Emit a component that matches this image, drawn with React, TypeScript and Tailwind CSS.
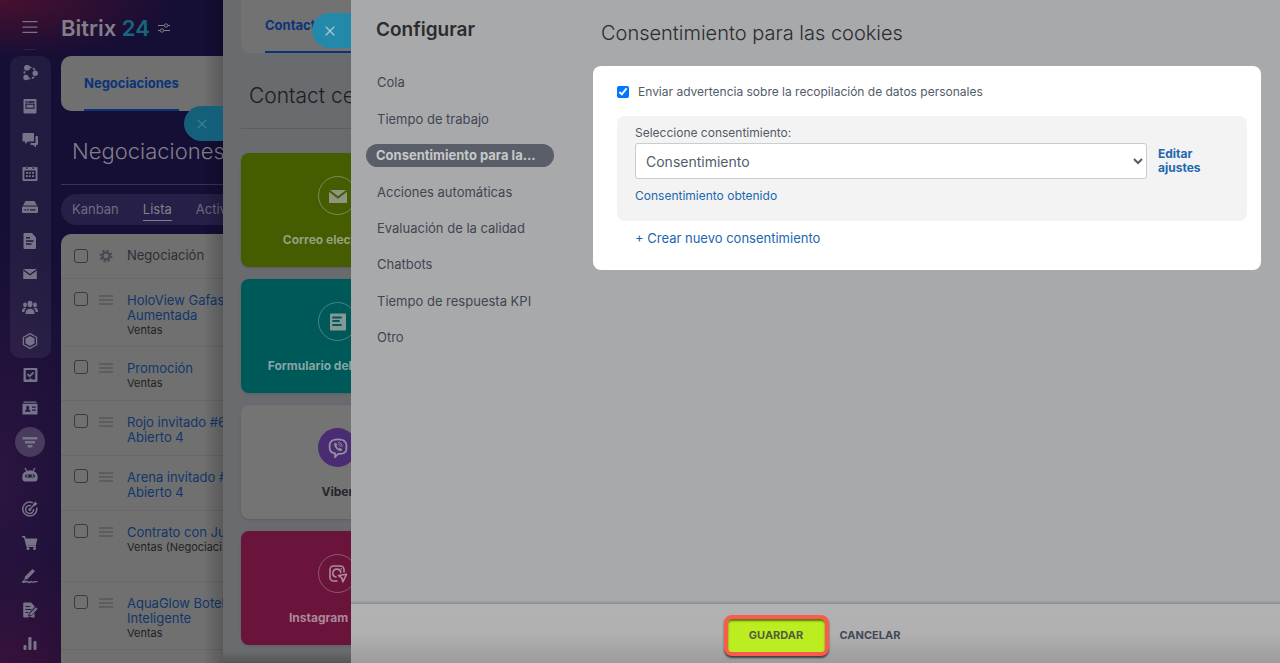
import React, { useState } from 'react';
import { X } from 'lucide-react';

interface IconProps {
  children: React.ReactNode;
  className?: string;
}

interface DealRow {
  id: string;
  lines: string[];
  note?: string;
  height: string;
}

interface ChannelCard {
  title: string;
  card: string;
  ring: string;
  text: string;
  icon: React.ReactNode;
}

// Solid 16px glyph, inner cut-outs use the dark sidebar colour
const Glyph: React.FC<IconProps> = ({ children, className = 'size-4' }) => (
  <svg viewBox="0 0 16 16" fill="currentColor" className={className} aria-hidden="true">
    {children}
  </svg>
);

const CUT = '#211a40';

const mainIcons: { label: string; icon: React.ReactNode }[] = [
  {
    label: 'Colaboración',
    icon: (
      <Glyph>
        <circle cx="8" cy="8" r="5.6" fill="none" stroke="currentColor" strokeWidth="1.7" strokeDasharray="2.6 1.5" />
        <circle cx="5" cy="2.7" r="2.9" />
        <circle cx="13.2" cy="8.3" r="2.7" />
        <circle cx="4" cy="12.5" r="2.7" />
      </Glyph>
    ),
  },
  {
    label: 'Noticias',
    icon: (
      <Glyph>
        <rect x="1.5" y="1" width="13" height="14.5" rx="1" />
        <path d="M3.5 3.2h2v1.5h-2zM6.3 3.2h6.2v1.5H6.3z" fill={CUT} />
        <rect x="4" y="6.2" width="8" height="4" fill="none" stroke={CUT} strokeWidth="1.1" />
      </Glyph>
    ),
  },
  {
    label: 'Chat',
    icon: (
      <Glyph>
        <path d="M1.5 1h9.5a1 1 0 0 1 1 1v6.500a1 1 0 0 1-1 1H6L3.200 12V9.500H1.500a1 1 0 0 1-1-1V2a1 1 0 0 1 1-1z" />
        <path d="M13.500 4H15a1 1 0 0 1 1 1v7a1 1 0 0 1-1 1h-1v2.500L11 13H8.500v-2H13.500z" />
      </Glyph>
    ),
  },
  {
    label: 'Calendario',
    icon: (
      <Glyph>
        <path d="M1.500 2h13a1 1 0 0 1 1 1v12a1 1 0 0 1-1 1h-13a1 1 0 0 1-1-1V3a1 1 0 0 1 1-1z" />
        <path d="M2.400 5.500h11.200v8.600H2.400z" fill={CUT} />
        <path d="M4 1h1.500v2.500H4zM10.500 1H12v2.500h-1.500z" stroke={CUT} strokeWidth="0.600" />
        <path d="M6.800 7h2v1.700h-2zM10 7h2v1.700h-2zM4 10.300h2V12H4zM6.800 10.300h2V12h-2zM10 10.300h2V12h-2zM4 7h2v1.700H4z" />
      </Glyph>
    ),
  },
  {
    label: 'Drive',
    icon: (
      <Glyph>
        <path d="M3.500 2h9L15 6.500H1zM1 7.500h14a1 1 0 0 1 1 1V13a1 1 0 0 1-1 1H1a1 1 0 0 1-1-1V8.500a1 1 0 0 1 1-1z" />
        <path d="M2.500 10.200h1.600v1.300H2.500zM5 10.200h1.600v1.300H5zM8 10.200h5.500v1.300H8z" fill={CUT} />
      </Glyph>
    ),
  },
  {
    label: 'Documentos',
    icon: (
      <Glyph>
        <path d="M2.500 0H10l4 4.500V15a1 1 0 0 1-1 1H2.500a1 1 0 0 1-1-1V1a1 1 0 0 1 1-1z" />
        <path d="M4 4.800h4M4 8h7.500M4 11h5.500" stroke={CUT} strokeWidth="1.400" />
      </Glyph>
    ),
  },
  {
    label: 'Correo',
    icon: (
      <Glyph>
        <path d="M1.200 3h13.600v10H1.200z" />
        <path d="M1.200 3.800l6.800 5 6.800-5" fill="none" stroke={CUT} strokeWidth="1.300" />
      </Glyph>
    ),
  },
  {
    label: 'Grupos',
    icon: (
      <Glyph className="w-[18px] h-4">
        <ellipse cx="8" cy="4" rx="2.500" ry="3.200" />
        <path d="M3.500 14c0-3.500 1.200-4.300 3.200-5.200h2.600c2 .9 3.200 1.700 3.200 5.200z" />
        <ellipse cx="3" cy="5" rx="1.900" ry="2.400" />
        <ellipse cx="13" cy="5" rx="1.900" ry="2.400" />
        <path d="M0 12c0-2.500.5-3.300 2-4h2.300C2.800 9.200 2.500 10.500 2.400 12zM16 12c0-2.500-.5-3.300-2-4h-2.300c1.500 1.200 1.800 2.500 1.900 4z" />
      </Glyph>
    ),
  },
  {
    label: 'CRM',
    icon: (
      <Glyph>
        <path d="M8 .6l6.600 3.700v7.400L8 15.400l-6.600-3.700V4.300z" fill="none" stroke="currentColor" strokeWidth="1.300" />
        <path d="M8 3l4.500 2.500v5L8 13l-4.500-2.500v-5z" />
      </Glyph>
    ),
  },
];

const extraIcons: { label: string; icon: React.ReactNode; active?: boolean }[] = [
  {
    label: 'Tareas',
    icon: (
      <Glyph>
        <rect x="1.500" y="1" width="14" height="14" rx="1" />
        <path d="M3.800 3h9.400v9.500H10L8.500 11 7 12.500H3.800z" fill={CUT} />
        <path d="M5.500 7.200l2.200 2.200 3.900-4" fill="none" stroke="currentColor" strokeWidth="1.700" />
      </Glyph>
    ),
  },
  {
    label: 'Contactos',
    icon: (
      <Glyph>
        <path d="M1.500 1.500h13v1.200h-13zM.5 3.700h15v10.800H.5z" />
        <path d="M3 11.800c0-1.600.8-2 1.800-2.500-1-1.500-.6-3.600.9-3.600s1.900 2.100.9 3.600c1 .5 1.800.9 1.800 2.500zM10 6.500h3.800v1.200H10zM10 9.500h3.800v1.200H10z" fill={CUT} />
      </Glyph>
    ),
  },
  {
    label: 'Embudo',
    active: true,
    icon: (
      <Glyph>
        <path d="M.5 3h15v2.500H.5zM3 7h10v2.500H3zM5.500 11h5v2.500h-5z" />
      </Glyph>
    ),
  },
  {
    label: 'Automatización',
    icon: (
      <Glyph>
        <path d="M3 1l1.800 3M13 1l-1.800 3" stroke="currentColor" strokeWidth="1.300" />
        <path d="M.3 10.500C.3 5.500 3.500 3.500 8 3.500s7.700 2 7.700 7c0 3-1.200 4-3 4H3.300c-1.800 0-3-1-3-4z" />
        <rect x="3" y="7.400" width="10" height="3.200" rx="1.600" fill={CUT} />
        <circle cx="5.500" cy="9" r="1" />
        <circle cx="10.500" cy="9" r="1" />
      </Glyph>
    ),
  },
  {
    label: 'Marketing',
    icon: (
      <Glyph>
        <path d="M10.800 1.700A7 7 0 1 0 14.600 6.500M9 4.700A4 4 0 1 0 11.600 8" fill="none" stroke="currentColor" strokeWidth="1.500" />
        <circle cx="7.800" cy="8.500" r="1.500" />
        <path d="M7.800 8.500L12 4" stroke="currentColor" strokeWidth="1.400" />
        <path d="M11 3l2.700-2.700.4 1.700 1.700.4L13 5h-2z" />
      </Glyph>
    ),
  },
  {
    label: 'Tienda',
    icon: (
      <Glyph>
        <path d="M0 1.800h2.500L5 11.200h9" fill="none" stroke="currentColor" strokeWidth="1.400" />
        <path d="M3 3.500h12.500L13.800 10.500H4.800z" />
        <circle cx="6" cy="13.500" r="1.500" />
        <circle cx="12.500" cy="13.500" r="1.500" />
      </Glyph>
    ),
  },
  {
    label: 'Firma',
    icon: (
      <Glyph>
        <path d="M10.500 1L13 3.300 5.500 11l-3.200.9.700-3.300zM.3 13c1.700-2 3 .5 4.500-.2s1.500 1.500 3 .6 1.200-1 2.500-.2 2-.7 5.200-.2v1.400c-2.700-.3-3.500 1-5 .3s-2.200 1.300-4 .2-3.200 0-6.200 0z" />
      </Glyph>
    ),
  },
  {
    label: 'Editar sitio',
    icon: (
      <Glyph>
        <path d="M2.200.5H9L12.500 4v1.200L7 11l-1 3.500 3.500-.8 3-3v4.800H10l-2-1-2 1H2.200a1 1 0 0 1-1-1v-13a1 1 0 0 1 1-1z" />
        <path d="M3.500 4.500H8M3.500 7.500h6M3.500 10.500h2.700" stroke={CUT} strokeWidth="1.200" />
        <path d="M14 5.200l1.700 1.600-6 6.200-2.300.6.600-2.300z" />
      </Glyph>
    ),
  },
  {
    label: 'Analítica',
    icon: (
      <Glyph>
        <rect x="1.500" y="10" width="3" height="5" rx="1" />
        <rect x="6.300" y="2" width="3.200" height="13" rx="1" />
        <rect x="11.500" y="6" width="3" height="9" rx="1" />
      </Glyph>
    ),
  },
];

const deals: DealRow[] = [
  { id: 'holoview', lines: ['HoloView Gafas', 'Aumentada'], note: 'Ventas', height: 'h-[68px]' },
  { id: 'promo', lines: ['Promoción'], note: 'Ventas', height: 'h-[54px]' },
  { id: 'rojo', lines: ['Rojo invitado #6', 'Abierto 4'], height: 'h-[55px]' },
  { id: 'arena', lines: ['Arena invitado #', 'Abierto 4'], height: 'h-[55px]' },
  { id: 'contrato', lines: ['Contrato con Ju'], note: 'Ventas (Negociaci', height: 'h-[71px]' },
  { id: 'aquaglow', lines: ['AquaGlow Botel', 'Inteligente'], note: 'Ventas', height: 'h-[68px]' },
];

const channels: ChannelCard[] = [
  {
    title: 'Correo electrónico',
    card: 'bg-[#465c00]',
    ring: 'border border-[#7d8a55]',
    text: 'text-[#989e80]',
    icon: (
      <svg viewBox="0 0 20 20" className="size-5 text-[#909582]" aria-hidden="true">
        <path d="M1 4h18v13H1z" fill="currentColor" />
        <path d="M1 4.500l9 7 9-7" fill="none" stroke="#465c00" strokeWidth="2" />
      </svg>
    ),
  },
  {
    title: 'Formulario del sitio web',
    card: 'bg-[#005959]',
    ring: 'border border-[#4b8383]',
    text: 'text-[#86a5a5]',
    icon: (
      <svg viewBox="0 0 20 20" className="size-5 text-[#869898]" aria-hidden="true">
        <rect x="2" y="1.500" width="16" height="17" rx="1" fill="currentColor" />
        <path d="M5 5.500h8M5 9h6M5 13h8" stroke="#005959" strokeWidth="1.800" strokeLinecap="round" />
      </svg>
    ),
  },
  {
    title: 'Viber',
    card: 'bg-[#747474]',
    ring: 'bg-[#4a2c72]',
    text: 'text-[#24272e]',
    icon: (
      <svg viewBox="0 0 20 20" fill="none" stroke="#978fa0" className="size-5" aria-hidden="true">
        <path d="M5.500 2C8 1.200 12 1.200 14.500 2c2.500.8 3.500 2 3.800 4.500.3 2.300.2 4.500-.3 6.200-.7 2.100-2.200 2.800-5.500 3.100-.8.100-1.500.100-2.300.100L7 19v-3.500C3.500 14.900 2.200 13.500 1.800 11c-.3-2-.3-3.500 0-5C2.200 3.500 3.300 2.700 5.500 2z" strokeWidth="1.800" />
        <path d="M6.500 5.500c-.7 3 2.500 7 6.500 7.500l1-1.500-2.200-1.500-1 .8C9.500 10 8.800 9.300 8.300 8L9 7 7.800 5z" fill="#978fa0" strokeWidth="0.500" />
        <path d="M10.500 4.500c2.200.2 3.500 1.500 3.700 3.800M10.700 6.500c1 .2 1.500.7 1.600 1.700" strokeWidth="1" strokeLinecap="round" />
      </svg>
    ),
  },
  {
    title: 'Instagram Direct',
    card: 'bg-[#6a143c]',
    ring: 'border border-[#8d5871]',
    text: 'text-[#ad8899]',
    icon: (
      <svg viewBox="0 0 20 20" fill="none" stroke="#ad8c9b" strokeWidth="1.600" className="size-5" strokeLinecap="round" strokeLinejoin="round" aria-hidden="true">
        <path d="M9 17H5.500A3.500 3.500 0 0 1 2 13.500v-8A3.500 3.500 0 0 1 5.500 2h7A3.500 3.500 0 0 1 16 5.500V8" />
        <path d="M8 13a4 4 0 1 1 4.800-4.500M13.300 4.800h.1" />
        <path d="M10.500 11.500l8-1.200-3.700 7.500-1-4z" />
      </svg>
    ),
  },
];

const settings = [
  'Cola',
  'Tiempo de trabajo',
  'Consentimiento para la...',
  'Acciones automáticas',
  'Evaluación de la calidad',
  'Chatbots',
  'Tiempo de respuesta KPI',
  'Otro',
];

const Sidebar: React.FC = () => (
  <nav className="w-[60px] shrink-0 flex flex-col items-center text-[#777388]">
    <button aria-label="Menú" className="h-[49px] pt-1 flex items-center">
      <Glyph>
        <path d="M.5 2h15v1.300H.5zM.5 7.400h15v1.300H.5zM.5 12.800h15v1.300H.5z" />
      </Glyph>
    </button>
    <div className="w-3 h-px mb-1.5 bg-[#2a2350]" />
    <div className="w-[41px] h-[302px] rounded-[10px] bg-white/6 flex flex-col">
      {mainIcons.map(item => (
        <a key={item.label} href="#" aria-label={item.label} className="flex-1 flex items-center justify-center">
          {item.icon}
        </a>
      ))}
    </div>
    <div className="w-[41px] h-[302px] flex flex-col">
      {extraIcons.map(item => (
        <a key={item.label} href="#" aria-label={item.label} className="flex-1 flex items-center justify-center">
          {item.active ? (
            <span className="size-[30px] shrink-0 rounded-full bg-[#483b5e] flex items-center justify-center">{item.icon}</span>
          ) : (
            item.icon
          )}
        </a>
      ))}
    </div>
  </nav>
);

const DealTable: React.FC = () => (
  <div className="mt-[9px] flex-1 rounded-tl-[10px] bg-[#707070] overflow-hidden">
    <table className="w-[320px] table-fixed border-collapse text-left whitespace-nowrap">
      <thead>
        <tr className="h-[44px] border-b border-[#66686a]">
          <th className="w-[38px] pl-[13px]">
            <input type="checkbox" aria-label="Seleccionar todo" className="block size-[14px] appearance-none rounded-[3px] border border-[#3a3b3d]" />
          </th>
          <th className="w-[28px]">
            <svg viewBox="0 0 16 16" fill="none" stroke="#44484f" className="size-[14px]" aria-label="Configurar columnas">
              <circle cx="8" cy="8" r="4" strokeWidth="2.400" />
              <circle cx="8" cy="8" r="6.300" strokeWidth="2" strokeDasharray="2.500 2.448" />
            </svg>
          </th>
          <th className="text-[13px] font-normal text-[#2b2f36]">Negociación</th>
        </tr>
      </thead>
      <tbody>
        {deals.map(deal => (
          <tr key={deal.id} className={`${deal.height} border-b border-[#66686a] align-top`}>
            <td className="pl-[13px] pt-[13px]">
              <input type="checkbox" aria-label={deal.lines[0]} className="block size-[14px] appearance-none rounded-[3px] border border-[#3a3b3d]" />
            </td>
            <td className="pt-4">
              <svg viewBox="0 0 14 10" className="w-[14px] h-[10px]" stroke="#54575c" strokeWidth="1.500" aria-hidden="true">
                <path d="M0 1h14M0 5h14M0 9h14" />
              </svg>
            </td>
            <td className="pt-[14px] leading-[15px]">
              <a href="#" className="block text-[13px] text-[#10376a]">
                {deal.lines.map(line => (
                  <span key={line} className="block">{line}</span>
                ))}
              </a>
              {deal.note && <span className="block text-[11px] leading-[14px] text-[#222]">{deal.note}</span>}
            </td>
          </tr>
        ))}
      </tbody>
    </table>
  </div>
);

const CrmPane: React.FC = () => (
  <section className="relative w-[223px] shrink-0 flex overflow-hidden bg-[#150e35] bg-[radial-gradient(ellipse_180px_60px_at_0px_0px,#48102f,transparent),radial-gradient(ellipse_110px_260px_at_0px_480px,#2b1540,transparent),radial-gradient(ellipse_140px_120px_at_0px_663px,#3c1038,transparent)]">
    <Sidebar />
    <div className="flex-1 min-w-0 pl-px flex flex-col whitespace-nowrap">
      <header className="h-14 flex items-center gap-2 text-[22px] font-semibold text-[#827f8a]">
        <span>
          Bitrix <span className="text-[#13687e]">24</span>
        </span>
        <svg viewBox="0 0 12 10" fill="none" stroke="currentColor" className="w-3 h-[10px]" aria-hidden="true">
          <path d="M0 2.500h6M10 2.500h2M0 7.500h2M6 7.500h6" />
          <circle cx="8" cy="2.500" r="1.700" />
          <circle cx="4" cy="7.500" r="1.700" />
        </svg>
      </header>
      <div className="h-[55px] pl-[23px] rounded-l-[10px] bg-[#707070] flex">
        <a href="#" className="pt-0.5 border-b-2 border-[#0b3478] flex items-center text-[13px] font-bold text-[#0b3478]">Negociaciones</a>
      </div>
      <h2 className="pt-[24px] pl-[11px] pb-[17px] leading-8 text-[22px] font-light text-[#827f8a]">Negociaciones</h2>
      <div className="h-px bg-[#3a3458]" />
      <div className="mt-[9px] h-[31px] pl-[11px] rounded-l-2xl bg-[#262048] flex items-center gap-6 text-[13px] text-[#6f6b83]">
        <a href="#">Kanban</a>
        <a href="#" className="pt-0.5 border-b border-[#827f8a] text-[#827f8a]">Lista</a>
        <a href="#">Activ</a>
      </div>
      <DealTable />
    </div>
    <div className="absolute inset-y-0 right-0 w-5 bg-linear-to-r from-transparent to-black/20" />
    <button aria-label="Cerrar negociaciones" className="absolute right-0 top-[106px] w-[39px] h-[35px] pr-[3px] rounded-l-full bg-[#145f79] flex items-center justify-center text-[#3f7f92]">
      <X className="size-4" strokeWidth={1.700} />
    </button>
  </section>
);

const ContactPane: React.FC = () => (
  <section className="relative w-[128px] shrink-0 pl-[18px] overflow-hidden bg-[#696b6e] flex flex-col whitespace-nowrap">
    <div className="h-[53px] pl-6 rounded-bl-lg bg-[#727273] flex">
      <a href="#" className="w-full border-b-2 border-[#0b3478] flex items-center text-[13px] font-bold text-[#0b3478]">Contact c</a>
    </div>
    <h2 className="pt-[27px] pb-4 pl-2 leading-8 text-[21px] font-light text-[#1b1d20]">Contact ce</h2>
    <div className="h-px bg-[#5c5e60]" />
    <div className="pt-[24px] flex flex-col gap-3">
      {channels.map(channel => (
        <a key={channel.title} href="#" className={`w-[193px] h-[114px] pt-[23px] rounded-lg shadow-sm flex flex-col items-center ${channel.card}`}>
          <span className={`size-[39px] rounded-full flex items-center justify-center ${channel.ring}`}>{channel.icon}</span>
          <span className={`mt-4 text-[12px] leading-[18px] font-bold ${channel.text}`}>{channel.title}</span>
        </a>
      ))}
    </div>
    <div className="absolute inset-x-0 bottom-0 h-3 bg-linear-to-b from-transparent to-black/20" />
    <button aria-label="Cerrar configuración" className="absolute right-0 top-[13px] w-[39px] h-[35px] pr-[3px] rounded-l-full bg-[#2389ab] flex items-center justify-center text-[#b4c9d0]">
      <X className="size-4" strokeWidth={1.700} />
    </button>
  </section>
);

const ConsentCard: React.FC = () => {
  const [enabled, setEnabled] = useState<boolean>(true);

  return (
    <div className="h-[204px] pl-6 pr-[14px] pt-[18px] rounded-lg bg-white text-[#525c69]">
      <label className="h-4 flex items-center gap-[9px] text-[12px]">
        <input type="checkbox" checked={enabled} onChange={e => setEnabled(e.target.checked)} className="size-3 accent-[#0075ff]" />
        Enviar advertencia sobre la recopilación de datos personales
      </label>
      <div className="mt-4 h-[105px] pl-[18px] pr-[34px] pt-2 rounded-lg bg-[#f3f3f3]">
        <label htmlFor="consent" className="block text-[12px] leading-[18px]">Seleccione consentimiento:</label>
        <div className="mt-px flex items-center gap-[11px]">
          <select id="consent" className="flex-1 h-9 px-1.5 rounded-[3px] border border-[#c6cdd3] bg-white text-[14px]">
            <option>Consentimiento</option>
          </select>
          <a href="#" className="w-[55px] text-[12px] leading-[14px] font-bold text-[#2067b0]">Editar ajustes</a>
        </div>
        <a href="#" className="mt-2 block text-[12px] leading-[18px] text-[#2067b0]">Consentimiento obtenido</a>
      </div>
      <a href="#" className="mt-[7px] ml-[18px] block text-[13px] leading-5 text-[#2067b0]">+ Crear nuevo consentimiento</a>
    </div>
  );
};

const SettingsPanel: React.FC = () => {
  const [active, setActive] = useState<string>(settings[2]);

  return (
    <section className="flex-1 min-w-0 bg-[#a8a9ab] flex flex-col">
      <div className="flex-1 flex">
        <aside className="w-[242px] shrink-0 pl-[15px]">
          <h1 className="pt-[14px] pl-[10px] leading-8 text-[19px] font-semibold text-[#2b2c2e]">Configurar</h1>
          <ul className="mt-[19px] h-[291px] flex flex-col">
            {settings.map(item => (
              <li key={item} className="flex-1 flex items-center">
                <button
                  onClick={() => setActive(item)}
                  className={
                    item === active
                      ? 'w-[188px] h-[23px] pl-[10px] rounded-full bg-[#5a5e68] text-left text-[13px] font-bold text-[#c6c8ca]'
                      : 'pl-[11px] text-[13px] text-[#3f4651]'
                  }
                >
                  {item}
                </button>
              </li>
            ))}
          </ul>
        </aside>
        <main className="flex-1 min-w-0 pr-[19px]">
          <h2 className="h-[66px] pl-2 flex items-center text-[20px] font-light text-[#2b2c2e]">Consentimiento para las cookies</h2>
          <ConsentCard />
        </main>
      </div>
      <footer className="h-[60px] pt-[3px] pr-[7px] border-t border-[#8f9092] bg-linear-to-b from-[#b2b2b2] via-[#b0b0b0] to-[#9c9c9c] shadow-[0_-1px_2px_rgba(0,0,0,0.15)] flex items-center justify-center gap-[11px] text-[11px] font-bold">
        <button className="w-[105px] h-[41px] rounded-lg border-4 border-[#fb5b4c] bg-[#bbed21] text-[#535c40] shadow-[0_2px_2px_rgba(0,0,0,0.6),inset_0_2px_2px_rgba(0,0,0,0.5)]">GUARDAR</button>
        <button className="text-[#424956]">CANCELAR</button>
      </footer>
    </section>
  );
};

export default function App() {
  return (
    <div className="min-h-screen flex font-['Inter','Liberation_Sans',sans-serif]">
      <CrmPane />
      <ContactPane />
      <SettingsPanel />
    </div>
  );
}
